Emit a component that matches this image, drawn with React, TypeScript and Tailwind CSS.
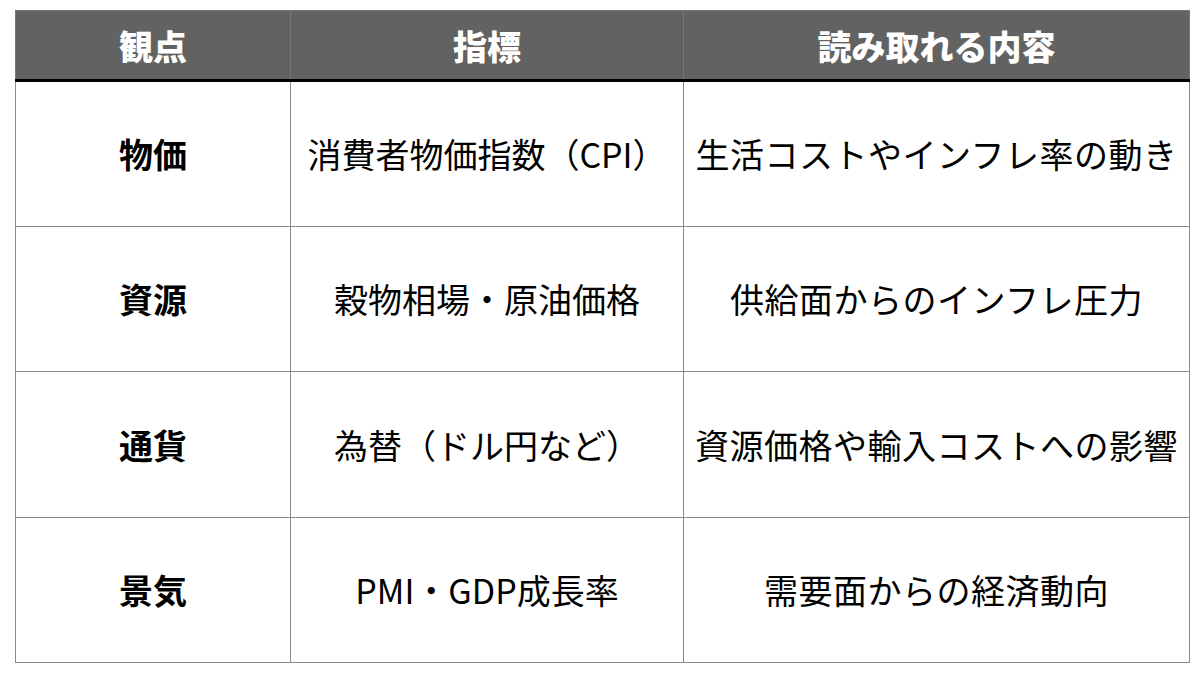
const rows = [
  { view: "物価", index: "消費者物価指数（CPI）", reading: "生活コストやインフレ率の動き" },
  { view: "資源", index: "穀物相場・原油価格", reading: "供給面からのインフレ圧力" },
  { view: "通貨", index: "為替（ドル円など）", reading: "資源価格や輸入コストへの影響" },
  { view: "景気", index: "PMI・GDP成長率", reading: "需要面からの経済動向" },
];

export default function App() {
  return (
    <div
      className="w-[1200px] h-[675px] bg-white pl-[15px] pt-[10px]"
      style={{ fontFamily: '"Noto Sans CJK JP", "Noto Sans", sans-serif' }}
    >
      <table className="w-[1174px] table-fixed border-collapse">
        <colgroup>
          <col className="w-[275px]" />
          <col className="w-[393px]" />
          <col className="w-[506px]" />
        </colgroup>
        <thead>
          <tr className="h-[70px] bg-[#626262] text-white">
            <th className="border border-[#777] border-b-[3px] border-b-black text-[34px] font-black">観点</th>
            <th className="border border-[#777] border-b-[3px] border-b-black text-[34px] font-black">指標</th>
            <th className="border border-[#777] border-b-[3px] border-b-black text-[34px] font-black">読み取れる内容</th>
          </tr>
        </thead>
        <tbody>
          {rows.map((r) => (
            <tr key={r.view} className="h-[145.5px] text-black">
              <td className="border border-[#8a8a8a] text-center text-[34px] font-bold">{r.view}</td>
              <td className="border border-[#8a8a8a] text-center text-[34px] whitespace-nowrap">{r.index}</td>
              <td className="border border-[#8a8a8a] text-center text-[34px] whitespace-nowrap tracking-[0.5px]">{r.reading}</td>
            </tr>
          ))}
        </tbody>
      </table>
    </div>
  );
}
